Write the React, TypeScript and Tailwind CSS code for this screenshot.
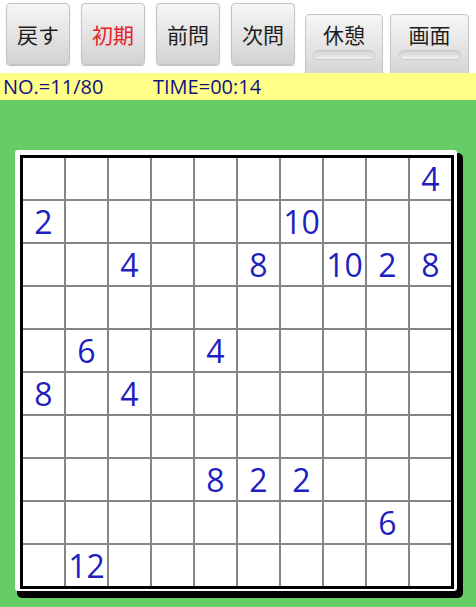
import React from "react";

const nums: Record<string, string> = {
  "0-9": "4",
  "1-0": "2",
  "1-6": "10",
  "2-2": "4",
  "2-5": "8",
  "2-7": "10",
  "2-8": "2",
  "2-9": "8",
  "4-1": "6",
  "4-4": "4",
  "5-0": "8",
  "5-2": "4",
  "7-4": "8",
  "7-5": "2",
  "7-6": "2",
  "8-8": "6",
  "9-1": "12",
};

const cjk = { fontFamily: '"Noto Sans CJK JP", "Noto Sans", sans-serif' };

function Btn({ label, red }: { label: string; red?: boolean }) {
  return (
    <div className="w-[64px] h-[62px] mt-[3px] rounded-[4px] border border-[#c4c4c4] bg-gradient-to-b from-[#f6f6f6] to-[#d2d2d2] shadow-[0_1px_1px_rgba(0,0,0,0.25)] flex items-center justify-center">
      <span className={`text-[21px] leading-none ${red ? "text-[#e8202a]" : "text-[#1e1e1e]"}`} style={cjk}>
        {label}
      </span>
    </div>
  );
}

function Toggle({ label, w }: { label: string; w: string }) {
  return (
    <div className={`${w} h-[64px] mt-[14px] rounded-[4px] border border-[#c4c4c4] bg-gradient-to-b from-[#f6f6f6] to-[#d4d4d4] flex flex-col items-center pt-[9px]`}>
      <span className="text-[21px] leading-none text-[#1e1e1e]" style={cjk}>
        {label}
      </span>
      <div className="mt-[5px] w-[62px] h-[10px] rounded-full bg-gradient-to-b from-[#d0d0d0] to-[#f2f2f2] border border-[#c8c8c8]" />
    </div>
  );
}

export default function App() {
  const rows = Array.from({ length: 10 }, (_, r) => r);
  const cols = Array.from({ length: 10 }, (_, c) => c);
  return (
    <div className="w-[476px] h-[607px] bg-white overflow-hidden flex flex-col">
      <div className="h-[73px] overflow-hidden flex items-start pl-[6px] shrink-0">
        <div className="flex gap-[11px]">
          <Btn label="戻す" />
          <Btn label="初期" red />
          <Btn label="前問" />
          <Btn label="次問" />
        </div>
        <div className="flex gap-[7px] ml-[10px]">
          <Toggle label="休憩" w="w-[78px]" />
          <Toggle label="画面" w="w-[79px]" />
        </div>
      </div>
      <div
        className="h-[27px] bg-[#ffff88] flex items-center text-[20px] leading-none text-[#101080] shrink-0"
        style={{ fontFamily: '"Open Sans", sans-serif' }}
      >
        <span className="ml-[3px] w-[150px]">NO.=11/80</span>
        <span>TIME=00:14</span>
      </div>
      <div className="flex-1 bg-[#66cc66] pt-[50px] pl-[15px]">
        <div className="w-[442px] h-[441px] bg-white rounded-[3px] shadow-[4px_5px_0_2px_#000] pt-[5px] pl-[5px]">
          <div className="w-[434px] h-[434px] border-[3px] border-black bg-[#858585] grid grid-cols-10 grid-rows-10 gap-[2px]">
            {rows.map((r) =>
              cols.map((c) => (
                <div
                  key={`${r}-${c}`}
                  className="bg-white flex items-center justify-center text-[32px] leading-none text-[#1f1fbf]"
                  style={{ fontFamily: '"Open Sans", sans-serif' }}
                >
                  {nums[`${r}-${c}`] ?? ""}
                </div>
              ))
            )}
          </div>
        </div>
      </div>
    </div>
  );
}
